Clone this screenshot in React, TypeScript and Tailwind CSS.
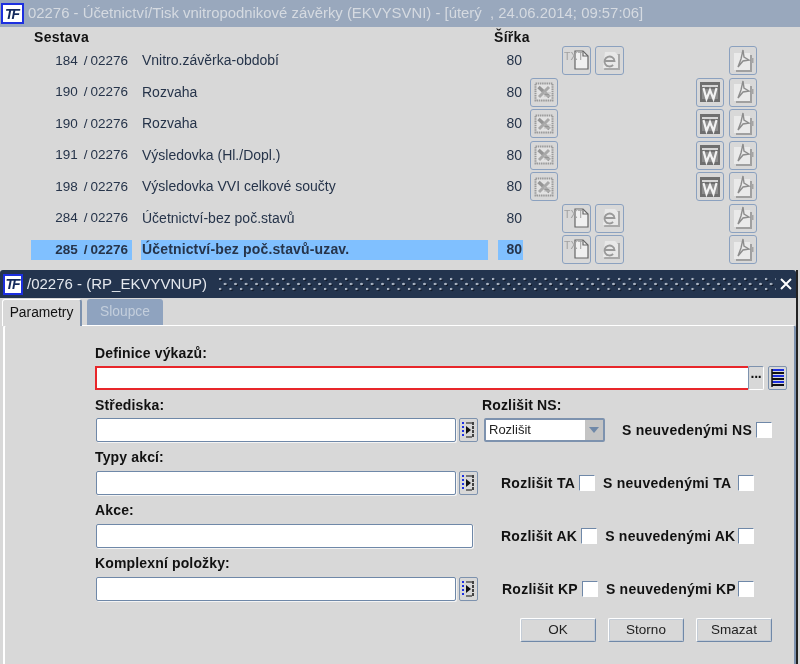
import type { ReactNode } from 'react';

const FONT = "font-['Liberation_Sans',Arial,sans-serif]";

const REPORTS = [
  { no: '184', name: 'Vnitro.závěrka-období', kind: 'txt' },
  { no: '190', name: 'Rozvaha', kind: 'office' },
  { no: '190', name: 'Rozvaha', kind: 'office' },
  { no: '191', name: 'Výsledovka (Hl./Dopl.)', kind: 'office' },
  { no: '198', name: 'Výsledovka VVI celkové součty', kind: 'office' },
  { no: '284', name: 'Účetnictví-bez poč.stavů', kind: 'txt' },
  { no: '285', name: 'Účetnictví-bez poč.stavů-uzav.', kind: 'txt', selected: true },
];

function Logo({ w }: { w: string }) {
  return (
    <span className={`flex h-[21px] ${w} shrink-0 items-center justify-center border-2 border-[#1c2fe0] bg-white text-[14px] font-bold italic leading-none text-[#14295c]`}>
      <span className="pr-[2px] tracking-[-2px]">TF</span>
    </span>
  );
}

function IconButton({ children, w = 'w-[28px]' }: { children: ReactNode; w?: string }) {
  return (
    <span className={`flex h-[29px] ${w} shrink-0 items-center justify-center rounded-[3px] border border-[#8ba1bf] bg-[#d8d8d8]`}>
      {children}
    </span>
  );
}

function ExcelIcon() {
  return (
    <svg width="20" height="20" viewBox="0 0 20 20" aria-hidden>
      <rect x="1.5" y="1.5" width="17" height="17" fill="#e2e2e2" stroke="#9a9a9a" strokeWidth="2" strokeDasharray="1.5 0.7" />
      <path d="M4.5 5l11 10" stroke="#959595" strokeWidth="3.5" />
      <path d="M15 5L5 15" stroke="#a8a8a8" strokeWidth="3" />
      <path d="M10 11h7M10 14h7" stroke="#bdbdbd" strokeWidth="1" />
    </svg>
  );
}

function WordIcon() {
  return (
    <svg width="20" height="20" viewBox="0 0 20 20" aria-hidden>
      <rect x="0" y="0" width="20" height="20" fill="#6f6f6f" />
      <rect x="2" y="3" width="16" height="2" fill="#d6d6d6" />
      <rect x="2" y="7" width="16" height="10" fill="#8c8c8c" />
      <path d="M3.5 6l3 11 3.5-9 3.5 9 3-11" fill="none" stroke="#f2f2f2" strokeWidth="2.2" />
    </svg>
  );
}

function PdfIcon() {
  return (
    <svg width="22" height="24" viewBox="0 0 22 24" aria-hidden>
      <path d="M4 6h16v17H4z" fill="#a0a0a0" />
      <path d="M2 4h16v17H2z" fill="#eaeaea" />
      <path d="M19 9h2.5v5H19z" fill="#a5a5a5" />
      <path d="M11 1l1 7 5 3-6 1-5 6 3-8z" fill="none" stroke="#8d8d8d" strokeWidth="1.4" />
    </svg>
  );
}

function TxtIcon() {
  return (
    <svg width="27" height="25" viewBox="0 0 27 25" aria-hidden>
      <path d="M12 3h8l5 5v13H12z" fill="#f0f0f0" stroke="#666" strokeWidth="1.2" />
      <path d="M20 3v5h5" fill="none" stroke="#666" strokeWidth="1.2" />
      <text x="1" y="12" fontFamily="Liberation Sans" fontSize="10.5" fill="#a0a0a0">TXT</text>
    </svg>
  );
}

function IeIcon() {
  return (
    <svg width="24" height="24" viewBox="0 0 24 24" aria-hidden>
      <path d="M9 5h13v16H6z" fill="#a9a9a9" />
      <path d="M7 3h10l3 3v13H5z" fill="#e8e8e8" />
      <path d="M6.5 12h10a5 5 0 1 0-1.4 4" fill="none" stroke="#999" strokeWidth="1.8" />
    </svg>
  );
}

function MoveIcon() {
  return (
    <span className="flex h-[24px] w-[19px] shrink-0 items-center justify-center rounded-[2px] border border-[#7d92ae] bg-[#d8d8d8]">
      <svg width="15" height="20" viewBox="0 0 15 20" aria-hidden>
        <path d="M2 2v16" stroke="#1c2fe0" strokeWidth="2" strokeDasharray="2 2" />
        <path d="M5 3h6M5 17h6" stroke="#111" strokeWidth="1" />
        <path d="M5 6l5 4-5 4z" fill="#111" />
        <path d="M12 2v16" stroke="#111" strokeWidth="1.5" strokeDasharray="3 1" />
      </svg>
    </span>
  );
}

function Input({ w, children }: { w: string; children?: ReactNode }) {
  return (
    <span className={`block h-[24px] ${w} shrink-0 rounded-[2px] border border-[#6f88a8] bg-white shadow-[1px_1px_0_#f4f4f4]`}>
      {children}
    </span>
  );
}

function Checkbox() {
  return <span className="block h-[16px] w-[16px] shrink-0 border border-[#6f88a8] border-r-white border-b-white bg-white" />;
}

function Label({ children, className = 'tracking-[0.15px]' }: { children: ReactNode; className?: string }) {
  return <span className={`whitespace-nowrap text-[14px] font-bold leading-none text-[#111] ${className}`}>{children}</span>;
}

function FieldLabel({ children, h }: { children: ReactNode; h: string }) {
  return (
    <div className={`flex ${h} items-center pl-[90px]`}>
      <Label>{children}</Label>
    </div>
  );
}

// last checkbox sits on the same column in all three rows
function Flags({ code, ml, w }: { code: string; ml: string; w: string }) {
  return (
    <div className={`flex items-center ${ml} ${w}`}>
      <Label className="tracking-[0.25px]">Rozlišit {code}</Label>
      <span className="ml-[4px]"><Checkbox /></span>
      <Label className="ml-[8px] tracking-[0.25px]">S neuvedenými {code}</Label>
      <span className="ml-auto"><Checkbox /></span>
    </div>
  );
}

function DialogButton({ children, ml }: { children: ReactNode; ml?: string }) {
  return (
    <span className={`flex h-[24px] w-[76px] items-center justify-center rounded-[2px] border border-white border-r-[#6f88a8] border-b-[#6f88a8] bg-[#d8d8d8] text-[13.5px] text-[#222] shadow-[inset_0_0_0_1px_#c4ccd6] ${ml ?? ''}`}>
      {children}
    </span>
  );
}

export default function App() {
  return (
    <div className={`${FONT} h-[664px] w-[800px] overflow-hidden bg-[#d8d8d8] blur-[0.3px]`}>
      {/* Main window */}
      <div className="flex h-[27px] items-center bg-[#99a8bd] pl-[1px]">
        <Logo w="w-[23px]" />
        <span className="ml-[4px] whitespace-pre text-[14.9px] text-[#d5dae1]">
          02276 - Účetnictví/Tisk vnitropodnikové závěrky (EKVYSVNI) - [úterý  , 24.06.2014; 09:57:06]
        </span>
      </div>
      <div className="h-[243px]">
        <div className="flex h-[18px] items-center pl-[34px] pt-[2px] text-[14px] font-bold tracking-[0.3px] text-[#111]">
          <span className="w-[460px]">Sestava</span>
          <span>Šířka</span>
        </div>
        {REPORTS.map((r, i) => (
          <div key={i} className="flex h-[31.5px] items-center pl-[31px] text-[14px] text-[#26344a]">
            <span className={`flex h-[20px] w-[101px] items-center justify-end pr-[4px] text-[13.5px] ${r.selected ? 'bg-[#80c0ff] font-bold' : ''}`}>
              {r.no}
              <span className="ml-[6px]">/</span>
              <span className="ml-[3px]">02276</span>
            </span>
            <span className={`ml-[9px] flex h-[20px] w-[347px] items-center pl-[1px] ${r.selected ? 'bg-[#80c0ff] font-bold tracking-[0.15px]' : ''}`}>
              {r.name}
            </span>
            <span className={`ml-[10px] flex h-[20px] w-[25px] items-center justify-end pr-[1px] ${r.selected ? 'bg-[#80c0ff] font-bold' : ''}`}>
              80
            </span>
            <span className="ml-[7px] w-[28px]">
              {r.kind === 'office' && <IconButton><ExcelIcon /></IconButton>}
            </span>
            <span className="ml-[4px] w-[29px]">
              {r.kind === 'txt' && <IconButton w="w-[29px]"><TxtIcon /></IconButton>}
            </span>
            <span className="ml-[4px] w-[29px]">
              {r.kind === 'txt' && <IconButton w="w-[29px]"><IeIcon /></IconButton>}
            </span>
            <span className="ml-[72px] w-[28px]">
              {r.kind === 'office' && <IconButton><WordIcon /></IconButton>}
            </span>
            <span className="ml-[5px] w-[28px]">
              <IconButton><PdfIcon /></IconButton>
            </span>
          </div>
        ))}
      </div>

      {/* Dialog */}
      <div className="h-[394px] w-[798px] border-r-2 border-[#222]">
        <div className="flex h-[28px] items-center rounded-t-[3px] bg-[#23344e] pl-[3px]">
          <Logo w="w-[20px]" />
          <span className="ml-[4px] whitespace-nowrap text-[15px] text-[#e4e8ee]">/02276 - (RP_EKVYVNUP)</span>
          <span className="ml-[11px] h-[15px] w-[558px] bg-[radial-gradient(circle_at_2px_2px,#a9b3c2_1.1px,transparent_1.6px),radial-gradient(circle_at_3px_3px,#0d1626_1.1px,transparent_1.6px),radial-gradient(circle_at_7px_7px,#a9b3c2_1.1px,transparent_1.6px),radial-gradient(circle_at_8px_8px,#0d1626_1.1px,transparent_1.6px)] bg-[length:10.5px_10px]" />
          <svg width="14" height="14" viewBox="0 0 14 14" className="ml-[3px]" aria-hidden>
            <path d="M2 2l10 10M12 2L2 12" stroke="#fff" strokeWidth="2" />
          </svg>
        </div>
        <div className="relative z-10 -mb-px flex h-[28px] items-end pl-[2px]">
          <span className="flex h-[27px] w-[80px] items-center justify-center rounded-t-[3px] border-t border-l border-white border-r-2 border-r-[#7d92ae] bg-[#d8d8d8] text-[13.8px] text-[#111]">
            Parametry
          </span>
          <span className="mb-px ml-[5px] flex h-[26px] w-[76px] items-center justify-center rounded-t-[3px] bg-[#8fa3bf] text-[13.8px] text-[#c3cedc]">
            Sloupce
          </span>
        </div>
        <div className="ml-[3px] h-[345px] w-[793px] rounded-t-[3px] border-t border-l-2 border-r-2 border-white border-r-[#7d92ae]">
          <FieldLabel h="h-[40px] pt-[14px]">Definice výkazů:</FieldLabel>
          <div className="flex items-center pl-[90px]">
            <span className="block h-[24px] w-[653px] shrink-0 border-y-2 border-l-2 border-[#e8262a] bg-white" />
            <span className="flex h-[24px] w-[16px] items-center justify-center rounded-[2px] border border-[#7d92ae] border-r-white border-b-white text-[14px] font-bold leading-none text-[#111]">
              <span className="-mt-[3px] tracking-[-1px]">···</span>
            </span>
            <span className="ml-[4px] flex h-[24px] w-[19px] items-center justify-center rounded-[2px] border border-[#7d92ae]">
              <svg width="15" height="20" viewBox="0 0 15 20" aria-hidden>
                <path d="M2 2h12M2 8h12M2 14h12" stroke="#1c2fe0" strokeWidth="2" />
                <path d="M2 5h12M2 11h12M2 17h12" stroke="#111" strokeWidth="2" />
                <path d="M2 1v18" stroke="#111" strokeWidth="1.5" />
              </svg>
            </span>
          </div>

          <div className="flex h-[28px] items-center pl-[90px] pt-[2px]">
            <Label className="w-[387px] tracking-[0.15px]">Střediska:</Label>
            <Label>Rozlišit NS:</Label>
          </div>
          <div className="flex items-center pl-[91px]">
            <Input w="w-[360px]" />
            <span className="ml-[3px]"><MoveIcon /></span>
            <span className="ml-[6px] flex h-[24px] w-[121px] items-center rounded-[2px] border-2 border-[#7d92ae] bg-white pl-[3px] text-[13px] text-[#222]">
              Rozlišit
              <span className="ml-auto flex h-full w-[18px] items-center justify-center bg-[#c4c4c4]">
                <svg width="10" height="6" viewBox="0 0 10 6" aria-hidden><path d="M0 0h10L5 6z" fill="#6f88a8" /></svg>
              </span>
            </span>
            <Label className="ml-[17px] tracking-[0.25px]">S neuvedenými NS</Label>
            <span className="ml-[4px]"><Checkbox /></span>
          </div>

          <FieldLabel h="h-[29px] pt-[1px]">Typy akcí:</FieldLabel>
          <div className="flex items-center pl-[91px]">
            <Input w="w-[360px]" />
            <span className="ml-[3px]"><MoveIcon /></span>
            <Flags code="TA" ml="ml-[23px]" w="w-[253px]" />
          </div>

          <FieldLabel h="h-[29px]">Akce:</FieldLabel>
          <div className="flex items-center pl-[91px]">
            <Input w="w-[377px]" />
            <Flags code="AK" ml="ml-[28px]" w="w-[253px]" />
          </div>

          <FieldLabel h="h-[29px]">Komplexní položky:</FieldLabel>
          <div className="flex items-center pl-[91px]">
            <Input w="w-[360px]" />
            <span className="ml-[3px]"><MoveIcon /></span>
            <Flags code="KP" ml="ml-[24px]" w="w-[252px]" />
          </div>

          <div className="flex pl-[515px] pt-[17px]">
            <DialogButton>OK</DialogButton>
            <DialogButton ml="ml-[12px]">Storno</DialogButton>
            <DialogButton ml="ml-[12px]">Smazat</DialogButton>
          </div>
        </div>
      </div>
    </div>
  );
}
